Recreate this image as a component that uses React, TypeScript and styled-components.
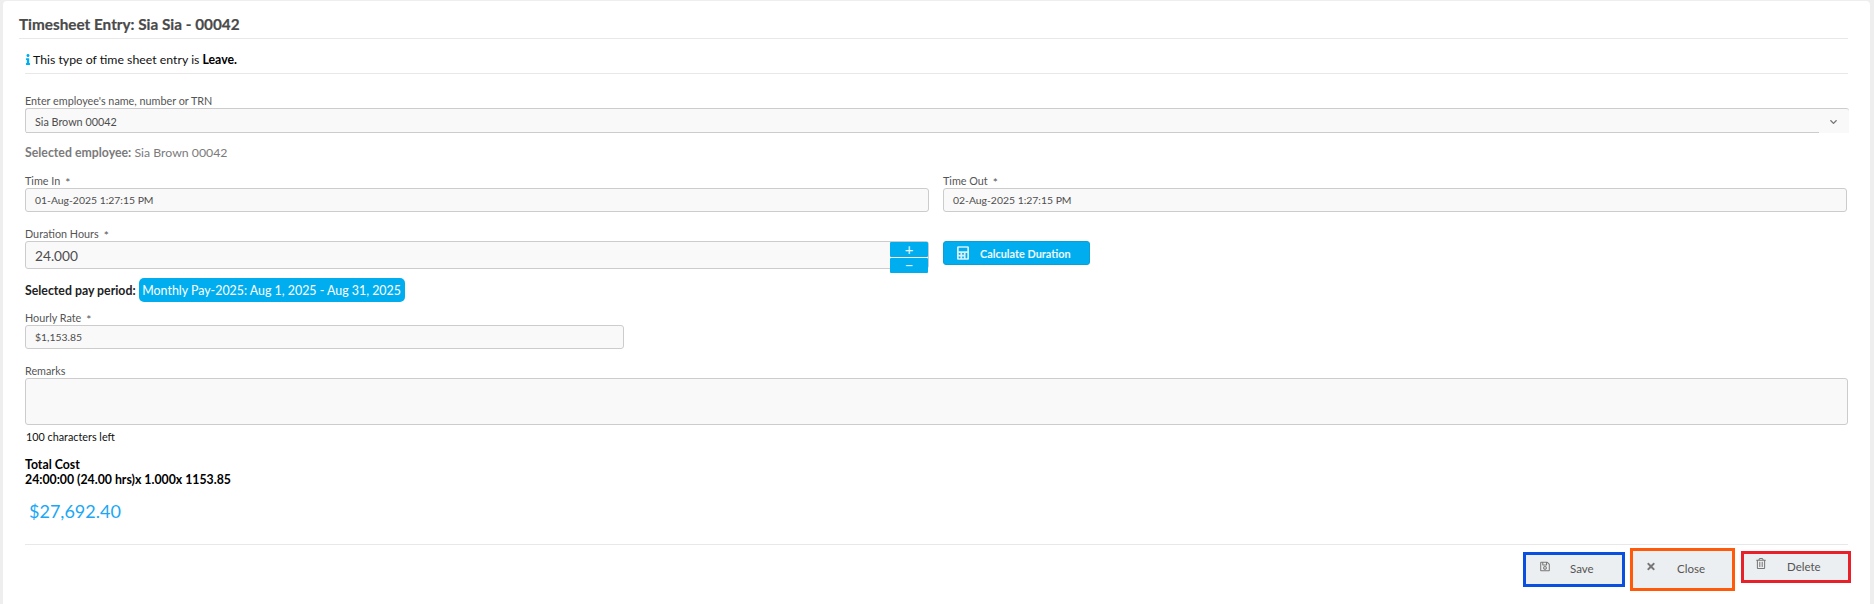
import React from "react";
import styled, { createGlobalStyle } from "styled-components";
import { FaCalculator, FaInfo, FaRegSave, FaRegTrashAlt, FaTimes, FaChevronDown } from "react-icons/fa";

const Global = createGlobalStyle`
  html, body { margin: 0; padding: 0; background: #eeeeee; height: 604px; overflow: hidden; }
  * { box-sizing: border-box; }
  body { font-family: Lato, "Open Sans", sans-serif; color: #000; }
`;

const Page = styled.div`
  height: 604px;
  padding: 1px 4px 0 3px;
`;
const Card = styled.main`
  height: 603px;
  background: #fff;
  border-radius: 4px 4px 0 0;
  padding: 0 22px 0 16px;
`;
const Title = styled.h1`
  margin: 0;
  height: 38px;
  padding-top: 14px;
  border-bottom: 1px solid #e8e8e8;
  font-size: 15.3px;
  line-height: 18px;
  font-weight: 700;
  color: #4a4a4a;
  -webkit-text-stroke: 0.2px #4a4a4a;
`;
const Form = styled.div`
  padding-left: 6px;
`;
const Info = styled.div`
  height: 35px;
  display: flex;
  align-items: center;
  border-bottom: 1px solid #e8e8e8;
  font-size: 12.3px;
  color: #111;
  padding-top: 6px;
  b { margin-left: 3px; font-weight: 700; color: #000; }
  svg { color: #00aeef; width: 6px; height: 11px; margin-right: 2px; }
`;
const Label = styled.label<{ $top: number }>`
  display: block;
  margin-top: ${(p) => p.$top}px;
  font-size: 10.8px;
  line-height: 14px;
  color: #555;
  sup { font-size: 12px; line-height: 0; position: relative; top: 2px; vertical-align: baseline; margin-left: 5px; }
`;
const Field = styled.div<{ $h?: number; $size?: number; $width?: number }>`
  height: ${(p) => p.$h ?? 24}px;
  width: ${(p) => (p.$width ? `${p.$width}px` : "100%")};
  background: #f9f9f9;
  border: 1px solid #ccc;
  border-radius: 3px;
  display: flex;
  align-items: center;
  padding-left: 9px;
  font-size: ${(p) => p.$size ?? 10.4}px;
  color: #4d4d4d;
`;
const SelectWrap = styled.div`
  position: relative;
  height: 25px;
  width: 1824px;
  background: #f9f9f9;
  display: flex;
  align-items: center;
  font-size: 10.8px;
  color: #4d4d4d;
  padding-left: 9px;
  border-top: 1px solid #ccc;
  border-left: 1px solid #ccc;
  border-radius: 3px 3px 0 3px;
`;
const SelectLine = styled.span`
  position: absolute;
  left: 0;
  bottom: 0;
  width: 1793px;
  border-bottom: 1px solid #ccc;
`;
const Chevron = styled(FaChevronDown)`
  position: absolute;
  right: 10px;
  top: 9px;
  width: 11px;
  height: 8px;
  color: #777;
`;
const Selected = styled.div`
  margin-top: 12px;
  font-size: 12.3px;
  line-height: 16px;
  color: #7b7b7b;
  b { font-weight: 700; }
`;
const Columns = styled.div`
  display: grid;
  grid-template-columns: 904px 904px;
  column-gap: 14px;
`;
const NumberField = styled(Field)`
  position: relative;
`;
const Spinner = styled.div`
  position: absolute;
  right: 0;
  top: 0;
  bottom: 0;
  width: 38px;
  display: flex;
  flex-direction: column;
  gap: 1px;
`;
const SpinButton = styled.span`
  flex: 1;
  background: #00aeef;
  color: #e5f6fd;
  display: flex;
  align-items: center;
  justify-content: center;
  font-size: 15px;
  line-height: 1;
  border-radius: 1px;
`;
const PrimaryButton = styled.button`
  width: 147px;
  height: 24px;
  border: 1px solid #0b9fd8;
  border-radius: 3px;
  background: #00aeef;
  color: #eef9fe;
  font: 700 10.9px Lato, sans-serif;
  display: flex;
  align-items: center;
  padding: 0 0 0 13px;
  gap: 11px;
  svg { width: 12px; height: 14px; color: #d5f0fb; }
`;
const PayPeriod = styled.div`
  margin-top: 9px;
  display: flex;
  align-items: center;
  gap: 3px;
  font-size: 12.3px;
  font-weight: 700;
  color: #222;
`;
const Badge = styled.span`
  height: 24px;
  width: 266px;
  display: flex;
  align-items: center;
  justify-content: center;
  background: #00aeef;
  border-radius: 5px;
  color: #fff;
  font-size: 12.4px;
  font-weight: 400;
  white-space: nowrap;
`;
const Counter = styled.div`
  margin-top: 5px;
  padding-left: 1px;
  font-size: 10.8px;
  line-height: 14px;
  color: #111;
`;
const Cost = styled.div`
  margin-top: 13px;
  font-size: 12.3px;
  line-height: 15px;
  font-weight: 700;
  color: #000;
`;
const Amount = styled.div`
  margin: 10px 0 0 4px;
  height: 37px;
  font-size: 18px;
  line-height: 28px;
  color: #1aa7f5;
`;
const Footer = styled.footer`
  margin-top: 10px;
  border-top: 1px solid #e8e8e8;
  height: 50px;
  display: flex;
  justify-content: flex-end;
  align-items: flex-start;
`;
const ActionButton = styled.button<{ $color: string; $width: number; $height: number; $top: number; $left: number; $pad: number; $gap: number; $over?: number }>`
  width: ${(p) => p.$width}px;
  height: ${(p) => p.$height}px;
  margin-top: ${(p) => p.$top}px;
  margin-left: ${(p) => p.$left}px;
  margin-right: ${(p) => p.$over ?? 0}px;
  border: 3px solid ${(p) => p.$color};
  background: #eceff1;
  color: #555;
  font: 400 11.5px Lato, sans-serif;
  display: flex;
  align-items: center;
  padding: 0 0 2px ${(p) => p.$pad}px;
  gap: ${(p) => p.$gap}px;
  svg { width: 10px; height: 11px; color: #777; margin-top: -5px; }
`;

export default function App() {
  return (
    <Page>
      <Global />
      <Card>
        <Title>Timesheet Entry: Sia Sia - 00042</Title>
        <Form>
          <Info>
            <FaInfo />
            This type of time sheet entry is <b>Leave.</b>
          </Info>
          <Label $top={20}>Enter employee's name, number or TRN</Label>
          <SelectWrap>
            Sia Brown 00042
            <SelectLine />
            <Chevron />
          </SelectWrap>
          <Selected>
            <b>Selected employee:</b> Sia Brown 00042
          </Selected>
          <Columns>
            <div>
              <Label $top={13}>Time In<sup>*</sup></Label>
              <Field>01-Aug-2025 1:27:15 PM</Field>
            </div>
            <div>
              <Label $top={13}>Time Out<sup>*</sup></Label>
              <Field>02-Aug-2025 1:27:15 PM</Field>
            </div>
          </Columns>
          <Columns>
            <div>
              <Label $top={15}>Duration Hours<sup>*</sup></Label>
              <NumberField $h={28} $size={13.7}>
                24.000
                <Spinner>
                  <SpinButton>+</SpinButton>
                  <SpinButton>−</SpinButton>
                </Spinner>
              </NumberField>
            </div>
            <div>
              <Label $top={15}>&nbsp;</Label>
              <PrimaryButton>
                <FaCalculator />
                Calculate Duration
              </PrimaryButton>
            </div>
          </Columns>
          <PayPeriod>
            Selected pay period:
            <Badge>Monthly Pay-2025: Aug 1, 2025 - Aug 31, 2025</Badge>
          </PayPeriod>
          <Label $top={9}>Hourly Rate<sup>*</sup></Label>
          <Field $width={599}>$1,153.85</Field>
          <Label $top={15}>Remarks</Label>
          <Field $h={47} />
          <Counter>100 characters left</Counter>
          <Cost>
            Total Cost
            <br />
            24:00:00 (24.00 hrs)x 1.000x 1153.85
          </Cost>
          <Amount>$27,692.40</Amount>
          <Footer>
            <ActionButton $color="#0a50e0" $width={102} $height={35} $top={7} $left={0} $pad={14} $gap={20}>
              <FaRegSave />
              Save
            </ActionButton>
            <ActionButton $color="#ff5a0a" $width={105} $height={43} $top={3} $left={5} $pad={13} $gap={21}>
              <FaTimes />
              Close
            </ActionButton>
            <ActionButton $color="#e8202a" $width={110} $height={32} $top={6} $left={6} $pad={12} $gap={21} $over={-3}>
              <FaRegTrashAlt />
              Delete
            </ActionButton>
          </Footer>
        </Form>
      </Card>
    </Page>
  );
}
